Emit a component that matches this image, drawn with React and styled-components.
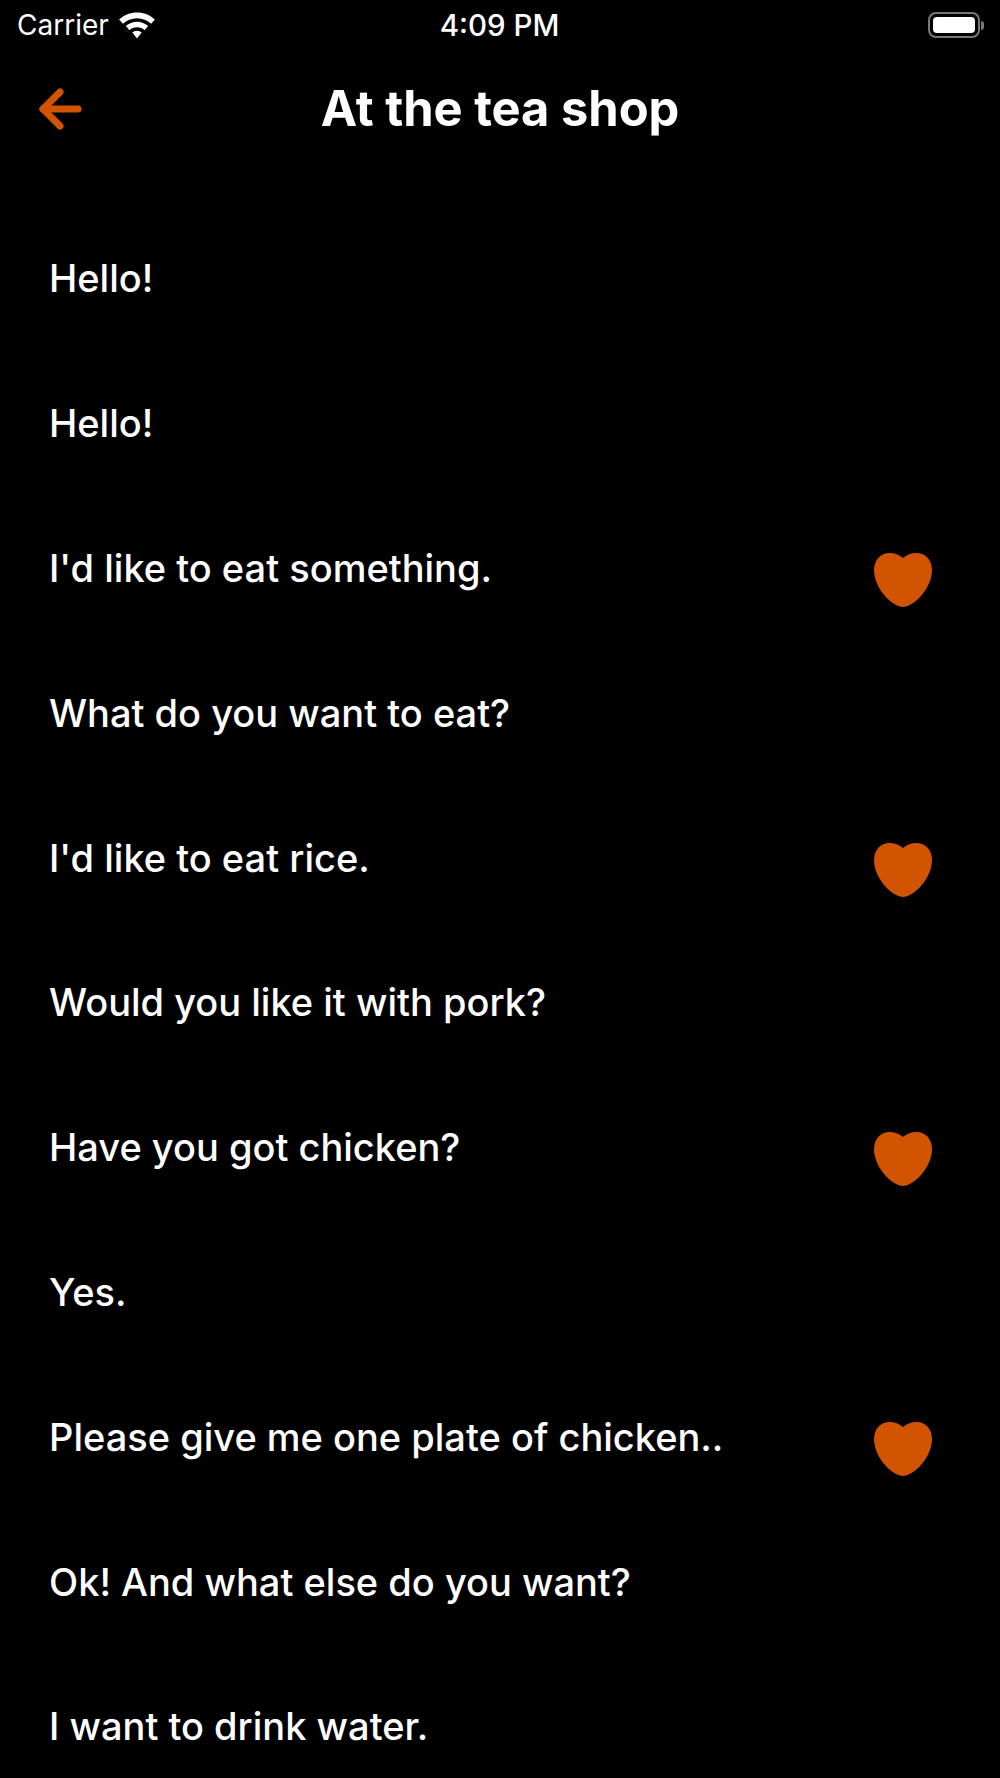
import React from 'react';
import styled, { createGlobalStyle } from 'styled-components';

const GlobalStyle = createGlobalStyle`
  html, body {
    margin: 0;
    padding: 0;
    background: #000;
  }
  body {
    font-family: Inter, "Noto Sans", sans-serif;
    color: #fff;
  }
`;

const phrases = [
  { text: 'Hello!' },
  { text: 'Hello!' },
  { text: "I'd like to eat something.", liked: true },
  { text: 'What do you want to eat?' },
  { text: "I'd like to eat rice.", liked: true },
  { text: 'Would you like it with pork?' },
  { text: 'Have you got chicken?', liked: true },
  { text: 'Yes.' },
  { text: 'Please give me one plate of chicken..', liked: true },
  { text: 'Ok! And what else do you want?' },
  { text: 'I want to drink water.' }
];

function WifiIcon() {
  return (
    <svg width="38" height="27" viewBox="0 0 36 26" fill="#fff">
      <path d="M18 0.5C11.5 0.5 5.5 3 0.8 7.3L4.4 11.2C8 8 12.8 6 18 6S28 8 31.6 11.2L35.2 7.3C30.5 3 24.5 0.5 18 0.5Z" />
      <path d="M18 9.4C13.9 9.4 10.2 11 7.2 13.6L10.8 17.5C12.7 15.8 15.2 14.8 18 14.8S23.3 15.8 25.2 17.5L28.8 13.6C25.8 11 22.1 9.4 18 9.4Z" />
      <path d="M18 18C16.3 18 14.7 18.7 13.5 19.8L18 25.5L22.5 19.8C21.3 18.7 19.7 18 18 18Z" />
    </svg>
  );
}

function BackArrow() {
  return (
    <svg width="44" height="44" viewBox="0 0 44 44" fill="none" stroke="#d35400" strokeWidth="7" strokeLinecap="round" strokeLinejoin="round">
      <path d="M39 22H4" />
      <path d="M21 5L4 22L21 39" />
    </svg>
  );
}

function Heart() {
  return (
    <svg width="58" height="54" viewBox="0 0 58 54" fill="#d35400">
      <path d="M29 5C33 1.6 37.5 0 42.5 0C51.5 0 58 7 58 17C58 33 44 50 32 53.5C30 54 28 54 26 53.5C14 50 0 33 0 17C0 7 6.5 0 15.5 0C20.5 0 25 1.6 29 5Z" />
    </svg>
  );
}

function App() {
  return (
    <Screen>
      <GlobalStyle />
      <StatusBar>
        <StatusLeft>
          <Carrier>Carrier</Carrier>
          <WifiIcon />
        </StatusLeft>
        <Clock>4:09 PM</Clock>
        <Battery>
          <BatteryBody>
            <BatteryFill />
          </BatteryBody>
          <BatteryCap />
        </Battery>
      </StatusBar>
      <Header>
        <BackButton>
          <BackArrow />
        </BackButton>
        <Title>At the tea shop</Title>
      </Header>
      <List>
        {phrases.map((phrase, i) => (
          <Row key={i}>
            <Phrase>{phrase.text}</Phrase>
            {phrase.liked && (
              <HeartSlot>
                <Heart />
              </HeartSlot>
            )}
          </Row>
        ))}
      </List>
    </Screen>
  );
}

const Screen = styled.div`
  width: 1000px;
  height: 1778px;
  overflow: hidden;
  background: #000;
`;

const StatusBar = styled.div`
  display: grid;
  grid-template-columns: 1fr auto 1fr;
  align-items: center;
  height: 50px;
  padding: 0 16px 0 17px;
`;

const StatusLeft = styled.div`
  display: flex;
  align-items: center;
  gap: 9px;
`;

const Carrier = styled.span`
  font-size: 28px;
  font-weight: 400;
`;

const Clock = styled.span`
  font-size: 29.5px;
  font-weight: 500;
  margin-left: -2px;
`;

const Battery = styled.div`
  display: flex;
  align-items: center;
  justify-content: flex-end;
`;

const BatteryBody = styled.div`
  box-sizing: border-box;
  width: 52px;
  height: 26px;
  padding: 3px;
  border: 2px solid #777;
  border-radius: 8px;
`;

const BatteryFill = styled.div`
  width: 100%;
  height: 100%;
  background: #fff;
  border-radius: 4px;
`;

const BatteryCap = styled.div`
  width: 3px;
  height: 9px;
  margin-left: 1px;
  background: #777;
  border-radius: 0 3px 3px 0;
`;

const Header = styled.div`
  position: relative;
  display: flex;
  align-items: center;
  justify-content: center;
  height: 116px;
`;

const BackButton = styled.div`
  position: absolute;
  left: 39px;
  top: 37px;
  display: flex;
`;

const Title = styled.h1`
  margin: 0;
  font-size: 48.8px;
  font-weight: 700;
`;

const List = styled.div`
  display: flex;
  flex-direction: column;
  margin-top: 40px;
`;

const Row = styled.div`
  display: flex;
  align-items: center;
  justify-content: space-between;
  box-sizing: border-box;
  height: 144.8px;
  padding: 0 68px 0 49px;
`;

const Phrase = styled.span`
  font-size: 38px;
  font-weight: 500;
`;

const HeartSlot = styled.div`
  display: flex;
  margin-top: 24px;
`;

export default App;
